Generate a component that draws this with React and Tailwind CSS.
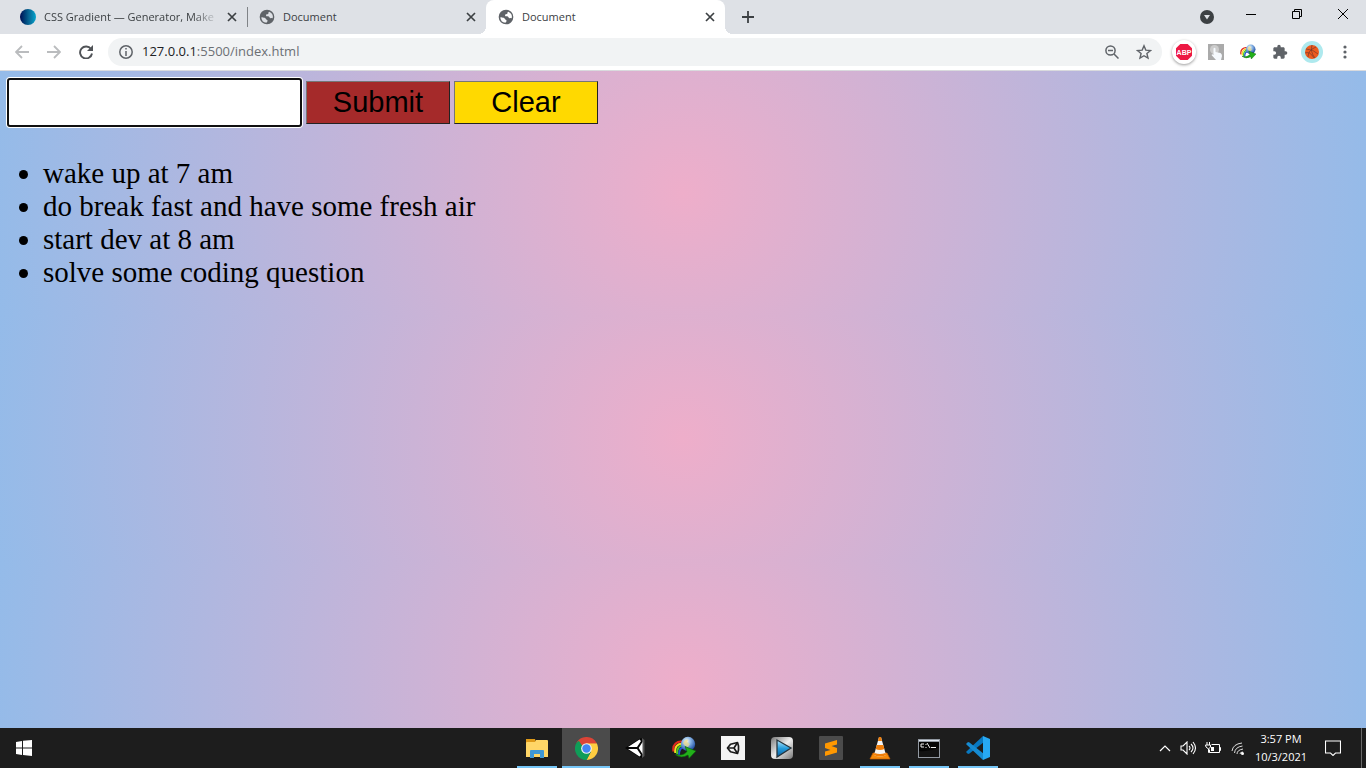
import React from "react";

function Close() {
  return (
    <svg viewBox="0 0 10 10" className="size-[10px]" fill="none" stroke="#3c4043" strokeWidth="1.7">
      <path d="M1 1l8 8M9 1l-8 8" />
    </svg>
  );
}

function Globe() {
  return (
    <svg viewBox="0 0 24 24" className="size-4 shrink-0" fill="#5f6368">
      <path fillRule="evenodd" d="M12 1a11 11 0 1 0 0 22 11 11 0 0 0 0-22zM3.4 12.5c2 .8 3.600 .3 5.200 .8 1.900 .7 1.200 2.200 3 2.700 1.200 .4 1.400 1.200 1.100 2.200-.3 1-1.400 1.300-1.500 2.600A8.700 8.700 0 0 1 3.400 12.500zM15.500 4.100c-1 .2-1.500 1.200-1.400 2.200.1 1.100-.8 1.400-2 1.400-1.300 0-1.500 1-1.500 2s1.200 1.400 2.400 1.300c1.400-.1 2.400.5 2.900 1.700.4 1 1.200 1.300 2.200 1 1-.3 1.700-.2 2.400.4a8.700 8.700 0 0 0-5-10z" />
    </svg>
  );
}

function IdmIcon({ className }) {
  return (
    <svg viewBox="0 0 24 24" className={className}>
      <defs>
        <radialGradient id="idm-globe" cx=".4" cy=".3" r=".7">
          <stop stopColor="#fffbe0" />
          <stop offset=".4" stopColor="#8db8e8" />
          <stop offset="1" stopColor="#1c4aa0" />
        </radialGradient>
      </defs>
      <g fill="none" strokeWidth="2">
        <path stroke="#e3291d" d="M12 6C5 4 0 9 1.500 15.500" />
        <path stroke="#f8d81f" d="M12 8C6 6.500 2.500 10.500 3.300 17" />
        <path stroke="#49c92c" d="M12 10C7.500 9 4.800 12 5.200 18.500" />
        <path stroke="#2158cf" d="M12 12C9 11 7 13.500 7 19" />
      </g>
      <circle cx="16" cy="8" r="7.200" fill="url(#idm-globe)" />
      <path d="M11 7q2-4 5-3l-1 2 3 2-2 3q-3 0-5-4z" fill="#f0dc85" opacity=".7" />
      <path d="M3 18.500q8 2 12-3l-2-5 11 4.500-7 7.500-1-3.500q-7 4-13-.5z" fill="#22b01a" stroke="#0b5c0c" strokeWidth=".6" />
    </svg>
  );
}

function Chrome() {
  return (
    <svg viewBox="0 0 24 24" className="size-[23px]">
      <path fill="#db4437" d="M12 12L1.600 6a12 12 0 0 1 20.800 0z" />
      <path fill="#0f9d58" d="M12 12v12A12 12 0 0 1 1.600 6z" />
      <path fill="#ffcd40" d="M12 6.500h10.700A12 12 0 0 1 12 24l4.800-9z" />
      <path fill="#db4437" d="M12 6.500h10.700L22.400 6 12 2z" />
      <path fill="#0f9d58" d="M7.200 14.800L1.600 6 4 4l4 6zM7.200 14.800L12 24l4.800-9.200z" />
      <circle cx="12" cy="12" r="5.600" fill="#f1f1f1" />
      <circle cx="12" cy="12" r="4.400" fill="#4285f4" />
    </svg>
  );
}

function Unity() {
  return (
    <svg viewBox="0 0 20 22" className="h-[22px] w-5">
      <path d="M0 11L16 1l3 2v16l-3 2z" fill="#050505" />
      <path d="M17 1l2.500 2v16L17 21z" fill="#555" />
      <path d="M3 10L14.500 2.500 16 4l-4 6zM3 12h9l4 6-1.500 1.500zM13.700 11L17.500 5v12z" fill="#fff" />
    </svg>
  );
}

function UnityHub() {
  return (
    <svg viewBox="0 0 14 14" className="size-[14px]" fill="none" stroke="#1a1a1a" strokeWidth="1.700" strokeLinejoin="round">
      <path d="M1.500 7L4.500 3.300 11.500 1.500 12.500 5v4l-1 3.500-7-1.800z" />
      <path d="M1.500 7h6.500M11.500 1.500L8 7l3.500 5.500" />
    </svg>
  );
}

function Folder() {
  return (
    <svg viewBox="0 0 22 19" className="h-[19px] w-[22px]">
      <path d="M0 0h9l1 3v3H0z" fill="#df9a18" />
      <path d="M0 4q0-1 1-1h8l1-2h11q1 0 1 1v16H0z" fill="#ffd667" />
      <path d="M4 19v-7q0-1 1-1h12q1 0 1 1v7h-4v-4H8v4z" fill="#3f97d5" />
    </svg>
  );
}

function Player() {
  return (
    <svg viewBox="0 0 24 24" className="size-6">
      <defs>
        <linearGradient id="metal" x2="1" y2="1"><stop stopColor="#777" /><stop offset=".5" stopColor="#eee" /><stop offset="1" stopColor="#777" /></linearGradient>
        <linearGradient id="play" x2="0" y2="1"><stop stopColor="#bceaff" /><stop offset=".5" stopColor="#249cdb" /><stop offset="1" stopColor="#075b9d" /></linearGradient>
      </defs>
      <rect x="1" y="1" width="22" height="22" rx="4" fill="url(#metal)" />
      <path d="M7 4v17l14-9z" fill="url(#play)" stroke="#26353e" strokeWidth="1.300" />
    </svg>
  );
}

function Sublime() {
  return (
    <svg viewBox="0 0 24 24" className="size-6">
      <rect width="24" height="24" rx="1" fill="#4b4b4b" />
      <path d="M6 7.500L18 4v4.500L12.500 10 18 12v4.500L6 20v-4.500l5.500-1.500L6 12z" fill="#ff9800" />
    </svg>
  );
}

function Vlc() {
  return (
    <svg viewBox="0 0 22 24" className="h-6 w-[22px]">
      <path d="M4 17h14l3 6H1z" fill="#f58a0b" stroke="#c85d00" strokeWidth=".7" />
      <path d="M10 1h2l5 18q-6 3-12 0z" fill="#f4f4f4" />
      <path d="M10 1h2l1 4H9zM7.800 9h6.400l1.200 4q-4.400 2-8.800 0zM5.500 17q5.500 2 11 0l.7 2q-6 3-12.400 0z" fill="#ef7d09" />
    </svg>
  );
}

function Terminal() {
  return (
    <svg viewBox="0 0 22 19" className="h-[19px] w-[22px]">
      <path d="M0 0h22v19H0z" fill="#9299a2" />
      <path d="M1 1h20v1H1z" fill="#dfe6f0" />
      <path d="M1 3h20v15H1z" fill="#050505" />
      <path d="M6 5H3v3h3M8 5v1M8 8v1M9 4l3 5M13 8.500h5" fill="none" stroke="#eee" />
      <path d="M1 12q10 1 20-3v9H1z" fill="#222" opacity=".5" />
    </svg>
  );
}

function VsCode() {
  return (
    <svg viewBox="0 0 24 24" className="size-6">
      <path d="M17 0L1.500 14.500 0 16l2 2 1.500-.5L18 6z" fill="#0878c1" />
      <path d="M17 24L1.500 9.500 0 8l2-2 1.500.5L18 18z" fill="#168bd2" />
      <path d="M17 0l7 3v18l-7 3z" fill="#27a9f4" />
    </svg>
  );
}

function Tab({ title, active, wide, children }) {
  return (
    <div className={`relative flex h-[34px] items-center gap-2 pr-[10px] text-[11px] text-[#3c4043] ${wide ? "w-[247px] pl-5" : "w-[239px] pl-3"} ${active ? "rounded-t-lg bg-white" : ""}`}>
      {children}
      <span className={`min-w-0 flex-1 whitespace-nowrap ${wide ? "[mask-image:linear-gradient(to_right,black_85%,transparent)]" : ""}`}>{title}</span>
      <button aria-label="Close tab"><Close /></button>
      {active && (
        <>
          <span className="absolute -left-2 bottom-0 size-2 bg-[radial-gradient(circle_at_top_left,transparent_8px,white_8px)]" />
          <span className="absolute -right-2 bottom-0 size-2 bg-[radial-gradient(circle_at_top_right,transparent_8px,white_8px)]" />
        </>
      )}
    </div>
  );
}

function BrowserChrome() {
  return (
    <header className="shrink-0 font-['Open_Sans','Noto_Sans',sans-serif]">
      <div className="flex h-[34px] items-center bg-[#dee1e6]">
        <Tab title="CSS Gradient — Generator, Make" wide>
          <span className="size-4 shrink-0 rounded-full bg-gradient-to-r from-[#020b54] via-[#075e8d] to-[#06a6ce]" />
        </Tab>
        <span className="-mr-px h-5 w-px bg-[#808387]" />
        <Tab title="Document"><Globe /></Tab>
        <Tab title="Document" active><Globe /></Tab>
        <button aria-label="New tab" className="ml-[17px]">
          <svg viewBox="0 0 12 12" className="size-3" stroke="#3c4043" strokeWidth="1.800"><path d="M6 0v12M0 6h12" /></svg>
        </button>
        <div className="ml-auto flex h-full items-start">
          <button aria-label="Search tabs" className="mr-8 mt-[10px]">
            <svg viewBox="0 0 14 14" className="size-[14px]"><circle cx="7" cy="7" r="7" fill="#3c4043" /><path d="M4 5h6L7 9.500z" fill="#dee1e6" /></svg>
          </button>
          <button aria-label="Minimize" className="mr-9 mt-[9px]">
            <svg viewBox="0 0 10 10" className="size-[10px]" stroke="#000"><path d="M0 5.500h10" /></svg>
          </button>
          <button aria-label="Restore" className="mr-9 mt-[9px]">
            <svg viewBox="0 0 10 10" className="size-[10px]" fill="none" stroke="#000"><path d="M.5 2.500h7v7h-7zM2.500 2.500v-2h7v7h-2" /></svg>
          </button>
          <button aria-label="Close window" className="mr-[18px] mt-[9px]">
            <svg viewBox="0 0 10 10" className="size-[10px]" stroke="#000"><path d="M0 0l10 10M10 0L0 10" /></svg>
          </button>
        </div>
      </div>
      <div className="flex h-[37px] items-center border-b border-[#d9dadd] bg-white pr-[19px]">
        <button aria-label="Back" className="ml-[15px]">
          <svg viewBox="0 0 14 14" className="size-[14px]" fill="none" stroke="#babcbe" strokeWidth="1.800"><path d="M14 7H1M7 1L1 7l6 6" /></svg>
        </button>
        <button aria-label="Forward" className="ml-[18px]">
          <svg viewBox="0 0 14 14" className="size-[14px]" fill="none" stroke="#babcbe" strokeWidth="1.800"><path d="M0 7h13M7 1l6 6-6 6" /></svg>
        </button>
        <button aria-label="Reload" className="ml-[18px]">
          <svg viewBox="0 0 14 14" className="size-[14px]" fill="none" stroke="#505357" strokeWidth="1.900"><path d="M12 4A6 6 0 1 0 13 8.500" /><path d="M14 0v6H8z" fill="#505357" stroke="none" /></svg>
        </button>
        <div className="ml-[15px] flex h-7 flex-1 items-center rounded-full bg-[#f1f3f4] pl-[11px] pr-[10px]">
          <svg viewBox="0 0 14 14" className="size-[14px]" fill="none" stroke="#5f6368" strokeWidth="1.500"><circle cx="7" cy="7" r="6.200" /><path d="M7 6v5M7 3v1.500" /></svg>
          <p className="ml-[9px] flex-1 text-[13px] text-[#6c7074]"><span className="text-[#202124]">127.0.0.1</span>:5500/index.html</p>
          <button aria-label="Zoom">
            <svg viewBox="0 0 14 14" className="size-[14px]" fill="none" stroke="#5f6368" strokeWidth="1.500"><circle cx="5.500" cy="5.500" r="4.600" /><path d="M9 9l4.500 4.500M3 5.500h5" /></svg>
          </button>
          <button aria-label="Bookmark" className="ml-[17px]">
            <svg viewBox="0 0 16 16" className="size-4" fill="none" stroke="#5f6368" strokeWidth="1.400"><path d="M8 1.800l1.800 4.300 4.700.4-3.600 3 1.100 4.600L8 11.700l-4 2.400 1.100-4.600-3.600-3 4.700-.4z" /></svg>
          </button>
        </div>
        <div className="ml-[10px] flex items-center">
          <button aria-label="Adblock Plus" className="flex size-6 items-center justify-center rounded-full bg-white shadow-[0_1px_3px_#999]">
            <svg viewBox="0 0 18 18" className="size-[18px]"><path d="M5.300 1h7.400L17 5.300v7.400L12.700 17H5.300L1 12.700V5.300z" fill="#ed1944" /><text x="9" y="11.500" textAnchor="middle" fontSize="7" fontWeight="700" fill="#fff" fontFamily="Liberation Sans">ABP</text></svg>
          </button>
          <button aria-label="Touch" className="ml-3">
            <svg viewBox="0 0 16 16" className="size-4"><path d="M0 0h16v16H0z" fill="#aaa" /><circle cx="6.500" cy="5.500" r="4.500" fill="#ccc" /><path d="M5.500 4.500q1-1.500 2 0V8l5 1q1.500 1 1.500 3l-1 4H8l-4.500-5q1-1.500 2 0z" fill="#f5f9fd" /></svg>
          </button>
          <button aria-label="Download manager" className="ml-4"><IdmIcon className="size-4" /></button>
          <button aria-label="Extensions" className="ml-4">
            <svg viewBox="0 0 24 24" className="size-4" fill="#5f6368"><path d="M20.500 11H19V7c0-1.100-.9-2-2-2h-4V3.500a2.500 2.500 0 0 0-5 0V5H4c-1.100 0-2 .9-2 2v3.800h1.500a2.700 2.700 0 0 1 0 5.400H2V20c0 1.100.9 2 2 2h3.800v-1.500a2.700 2.700 0 0 1 5.400 0V22H17c1.100 0 2-.9 2-2v-4h1.500a2.500 2.500 0 0 0 0-5z" /></svg>
          </button>
          <button aria-label="Profile" className="ml-[13px] flex size-[22px] items-center justify-center rounded-full bg-[#aee9ee]">
            <svg viewBox="0 0 14 14" className="size-[14px]"><circle cx="7" cy="7" r="7" fill="#ee5a1c" /><path d="M1 4q7 0 12 5M3 12q0-7 8-10M7 0q-2 7 3 13M0 8q5-2 9 5" stroke="#61342b" strokeWidth=".6" fill="none" /></svg>
          </button>
          <button aria-label="Menu" className="ml-5">
            <svg viewBox="0 0 4 14" className="h-[14px] w-1" fill="#5f6368"><circle cx="2" cy="2" r="1.600" /><circle cx="2" cy="7" r="1.600" /><circle cx="2" cy="12" r="1.600" /></svg>
          </button>
        </div>
      </div>
    </header>
  );
}

const tasks = ["wake up at 7 am", "do break fast and have some fresh air", "start dev at 8 am", "solve some coding question"];

function TodoPage() {
  return (
    <main className="flex-1 bg-[radial-gradient(circle,#eeaeca_0%,#94bbe9_100%)] bg-[length:100%_245px] px-[7px] pt-[7px] text-black">
      <form className="flex items-center gap-1 font-['Liberation_Sans',sans-serif] text-[29px] leading-[33px]" onSubmit={(e) => e.preventDefault()}>
        <input aria-label="New task" className="h-[49px] w-[295px] rounded-[3px] border-2 border-[#101010] bg-white px-2 shadow-[0_0_0_1px_white] outline-none" />
        <button className="h-[43px] w-36 border border-t-[#767676] border-r-[#222] border-b-[#222] border-l-[#767676] bg-[#a52a2a]">Submit</button>
        <button type="button" className="h-[43px] w-36 border border-t-[#767676] border-r-[#222] border-b-[#222] border-l-[#767676] bg-[#ffd900]">Clear</button>
      </form>
      <ul className="mt-[30px] list-disc pl-9 font-['Liberation_Serif',serif] text-[29px] leading-[33px]">
        {tasks.map((t) => <li key={t}>{t}</li>)}
      </ul>
    </main>
  );
}

function AppButton({ label, open, active, children }) {
  return (
    <button aria-label={label} className={`relative flex h-full w-12 items-center justify-center ${active ? "bg-[#4b4b4b]" : ""}`}>
      {children}
      {open && <span className={`absolute bottom-0 h-0.5 bg-[#76c6f7] ${active ? "inset-x-0" : "inset-x-1"}`} />}
    </button>
  );
}

function Taskbar() {
  return (
    <footer className="flex h-10 shrink-0 items-center bg-[#1d1d1d] font-['Open_Sans','Noto_Sans',sans-serif] text-white">
      <button aria-label="Start" className="ml-4">
        <svg viewBox="0 0 16 16" className="size-4" fill="#fff"><path d="M0 2l6-1v6.500H0zM7 .8L16 0v7.500H7zM0 8.500h6V15l-6-1zM7 8.500h9V16l-9-1z" /></svg>
      </button>
      <nav aria-label="Applications" className="ml-[481px] flex h-full gap-px">
        <AppButton label="File Explorer" open><Folder /></AppButton>
        <AppButton label="Chrome" open active><Chrome /></AppButton>
        <AppButton label="Unity"><Unity /></AppButton>
        <AppButton label="Download Manager"><IdmIcon className="size-6" /></AppButton>
        <AppButton label="Unity Hub"><span className="flex size-6 items-center justify-center bg-[#f4f4f4]"><UnityHub /></span></AppButton>
        <AppButton label="Media Player"><Player /></AppButton>
        <AppButton label="Sublime Text"><Sublime /></AppButton>
        <AppButton label="VLC" open><Vlc /></AppButton>
        <AppButton label="Command Prompt" open><Terminal /></AppButton>
        <AppButton label="Visual Studio Code" open><VsCode /></AppButton>
      </nav>
      <div className="ml-auto flex h-full items-center">
        <svg viewBox="0 0 12 8" className="h-2 w-3" fill="none" stroke="#fff" strokeWidth="1.200"><path d="M1 7l5-5 5 5" /></svg>
        <svg viewBox="0 0 17 14" className="ml-[9px] h-[14px] w-[17px]" fill="none" stroke="#fff" strokeWidth="1.100"><path d="M1 5h2l4-4v12L3 9H1zM9 5q2 2 0 4M11 3q4 4 0 8M13 1q5 6 0 12" /></svg>
        <svg viewBox="0 0 16 12" className="ml-2 h-3 w-4" fill="none" stroke="#fff"><path d="M6.500 2.500h8v8h-10v-3M14.500 5.500h1v3h-1M2 0v3M4.500 0v3M.5 3h5v2L3.500 7 1 5zM3.500 7v3.500h1" /><path d="M6 5h3v4H6z" fill="#fff" stroke="none" /></svg>
        <svg viewBox="0 0 14 14" className="ml-[10px] size-[14px]" fill="none" stroke="#ddd"><path d="M1 10Q2 3 11 2M3.500 12Q4 6 11.500 5M6 13Q6 9 12 8M9 13q0-2 3-2" /><circle cx="11.500" cy="12.500" r="1.500" fill="#fff" stroke="none" /></svg>
        <div className="ml-2 w-[56px] text-center text-[11px] leading-[18px]"><div className="whitespace-nowrap">3:57 PM</div><div className="whitespace-nowrap">10/3/2021</div></div>
        <button aria-label="Notifications" className="ml-4 mr-5">
          <svg viewBox="0 0 16 16" className="size-4" fill="none" stroke="#fff" strokeWidth="1.100"><path d="M.5 1h15v12h-5L8 15.500 5.500 13h-5z" /></svg>
        </button>
        <span className="mr-1 h-full w-px bg-[#696969]" />
      </div>
    </footer>
  );
}

export default function App() {
  return (
    <div className="flex min-h-screen flex-col">
      <BrowserChrome />
      <TodoPage />
      <Taskbar />
    </div>
  );
}
